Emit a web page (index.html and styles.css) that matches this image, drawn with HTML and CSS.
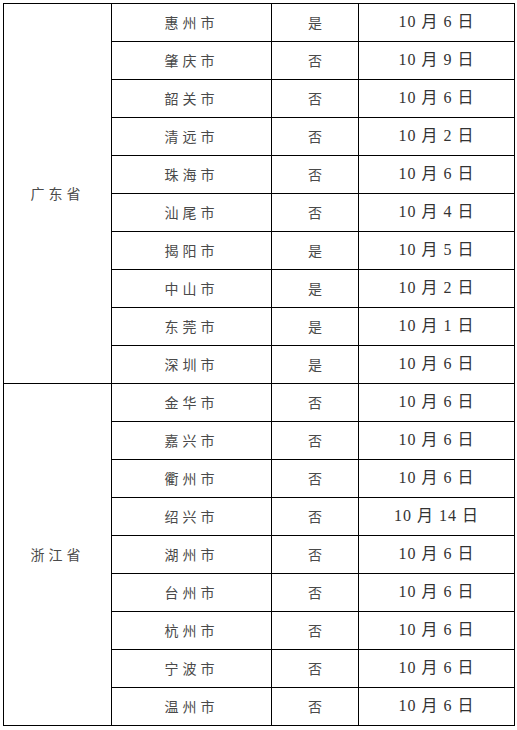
FILE: index.html
```html
<!DOCTYPE html>
<html lang="zh">
<head>
<meta charset="utf-8">
<link rel="stylesheet" href="styles.css">
</head>
<body>
<table class="grid">
<colgroup>
<col class="c1"><col class="c2"><col class="c3"><col class="c4">
</colgroup>
<tbody>
<tr><td class="prov" rowspan="10">广东省</td><td class="city">惠州市</td><td class="yn">是</td><td class="date">10 月 6 日</td></tr>
<tr><td class="city">肇庆市</td><td class="yn">否</td><td class="date">10 月 9 日</td></tr>
<tr><td class="city">韶关市</td><td class="yn">否</td><td class="date">10 月 6 日</td></tr>
<tr><td class="city">清远市</td><td class="yn">否</td><td class="date">10 月 2 日</td></tr>
<tr><td class="city">珠海市</td><td class="yn">否</td><td class="date">10 月 6 日</td></tr>
<tr><td class="city">汕尾市</td><td class="yn">否</td><td class="date">10 月 4 日</td></tr>
<tr><td class="city">揭阳市</td><td class="yn">是</td><td class="date">10 月 5 日</td></tr>
<tr><td class="city">中山市</td><td class="yn">是</td><td class="date">10 月 2 日</td></tr>
<tr><td class="city">东莞市</td><td class="yn">是</td><td class="date">10 月 1 日</td></tr>
<tr><td class="city">深圳市</td><td class="yn">是</td><td class="date">10 月 6 日</td></tr>
<tr><td class="prov" rowspan="9">浙江省</td><td class="city">金华市</td><td class="yn">否</td><td class="date">10 月 6 日</td></tr>
<tr><td class="city">嘉兴市</td><td class="yn">否</td><td class="date">10 月 6 日</td></tr>
<tr><td class="city">衢州市</td><td class="yn">否</td><td class="date">10 月 6 日</td></tr>
<tr><td class="city">绍兴市</td><td class="yn">否</td><td class="date">10 月 14 日</td></tr>
<tr><td class="city">湖州市</td><td class="yn">否</td><td class="date">10 月 6 日</td></tr>
<tr><td class="city">台州市</td><td class="yn">否</td><td class="date">10 月 6 日</td></tr>
<tr><td class="city">杭州市</td><td class="yn">否</td><td class="date">10 月 6 日</td></tr>
<tr><td class="city">宁波市</td><td class="yn">否</td><td class="date">10 月 6 日</td></tr>
<tr><td class="city">温州市</td><td class="yn">否</td><td class="date">10 月 6 日</td></tr>
</tbody>
</table>
</body>
</html>
```

FILE: styles.css
```css
html, body {
  margin: 0;
  padding: 0;
  background: #ffffff;
}
body {
  padding: 3px 0 0 3px;
  font-family: "Liberation Serif", "Noto Sans CJK SC", serif;
  color: #2a2a2a;
}
.grid {
  border-collapse: collapse;
  table-layout: fixed;
  width: 511px;
}
.c1 { width: 108px; }
.c2 { width: 160px; }
.c3 { width: 87px; }
.c4 { width: 156px; }
.grid td {
  border: 1px solid #000;
  height: 35px;
  padding: 0 0 2px 0;
  text-align: center;
  vertical-align: middle;
  line-height: 1;
}
.prov, .city, .yn {
  font-family: "Noto Sans CJK SC", sans-serif;
  font-size: 14px;
  letter-spacing: 4px;
  color: #4a4a4a;
}
.yn {
  letter-spacing: 0;
}
.date {
  font-size: 16px;
  letter-spacing: 1px;
  color: #333;
}
```
